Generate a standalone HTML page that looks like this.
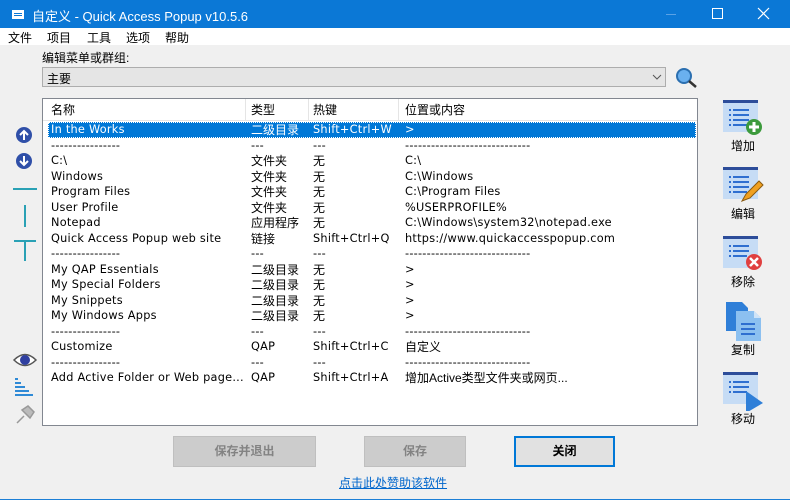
<!DOCTYPE html>
<html><head><meta charset="utf-8"><style>
*{margin:0;padding:0;box-sizing:border-box}
body{width:790px;height:500px;overflow:hidden;background:#f0f0f0;font-family:"DejaVu Sans","Noto Sans CJK SC",sans-serif;font-size:11px;color:#000;position:relative}
.a{position:absolute;white-space:nowrap}
.cjk{font-family:"Liberation Sans","Noto Sans CJK SC",sans-serif;font-size:12px}
#title{left:0;top:0;width:790px;height:28px;background:#0b78d6;color:#fff}
#menu{left:0;top:28px;width:790px;height:17px;background:#fff}
#list{left:42px;top:98px;width:656px;height:328px;background:#fff;border:1px solid #828790}
.row{position:absolute;left:0;height:15.5px;width:654px;line-height:16px;font-size:11.3px;letter-spacing:0.25px}
.row span{position:absolute;top:0}
.row .cjk{letter-spacing:0;font-size:12px}
.sel{background:#0078d7;color:#fff;outline:1px dotted #fff;outline-offset:-1px}
.btn{position:absolute;height:31px;background:#cccccc;border:1px solid #bfbfbf;color:#838383;font-weight:bold;text-align:center;line-height:29px;font-family:"Liberation Sans","Noto Sans CJK SC",sans-serif;font-size:12px}
.rl{font-family:"Liberation Sans","Noto Sans CJK SC",sans-serif;font-size:12px;text-align:center;width:50px}
</style></head><body>
<div class="a" id="title">
 <svg class="a" style="left:11px;top:9px" width="14" height="11"><rect x="1" y="1" width="12" height="9" fill="#fff"/><rect x="3" y="4" width="8" height="1" fill="#0b78d6"/><rect x="3" y="6" width="8" height="1" fill="#0b78d6"/></svg>
 <span class="a cjk" style="left:32px;top:6px;font-size:13px">自定义 - Quick Access Popup v10.5.6</span>
 <div class="a" style="left:666px;top:14px;width:10px;height:1px;background:#5aa2e6"></div>
 <div class="a" style="left:712px;top:8px;width:11px;height:11px;border:1px solid #fff"></div>
 <svg class="a" style="left:757px;top:7px" width="13" height="13"><path d="M1 1L12 12M12 1L1 12" stroke="#fff" stroke-width="1.2"/></svg>
</div>
<div class="a" id="menu"><span class="a cjk" style="left:8px;top:1px">文件</span><span class="a cjk" style="left:47px;top:1px">项目</span><span class="a cjk" style="left:87px;top:1px">工具</span><span class="a cjk" style="left:126px;top:1px">选项</span><span class="a cjk" style="left:165px;top:1px">帮助</span></div>
<span class="a cjk" style="left:42px;top:49px">编辑菜单或群组:</span>
<div class="a" style="left:42px;top:67px;width:624px;height:20px;background:#e5e5e5;border:1px solid #adadad"><span class="a cjk" style="left:4px;top:2px">主要</span><svg class="a" style="left:609px;top:6px" width="10" height="6"><path d="M1 1L5 5L9 1" stroke="#555" fill="none"/></svg></div>
<svg class="a" style="left:675px;top:67px" width="24" height="22"><circle cx="9" cy="9" r="7" fill="#6ab0ef" stroke="#2b6fb0" stroke-width="2"/><path d="M14 14L21 20" stroke="#333" stroke-width="2.5"/></svg>
<div class="a" id="list">
 <div class="row" style="top:0;height:22px;line-height:22px;border-bottom:1px solid #e5e5e5"><span class="cjk" style="left:8px">名称</span><span class="cjk" style="left:208px">类型</span><span class="cjk" style="left:270px">热键</span><span class="cjk" style="left:362px">位置或内容</span>
  <i class="a" style="left:202px;top:0;width:1px;height:22px;background:#e5e5e5"></i><i class="a" style="left:265px;top:0;width:1px;height:22px;background:#e5e5e5"></i><i class="a" style="left:355px;top:0;width:1px;height:22px;background:#e5e5e5"></i></div>
 <div class="row sel" style="top:23px;left:5px;width:648px"><span style="left:3px">In the Works</span><span class="cjk" style="left:203px">二级目录</span><span style="left:265px">Shift+Ctrl+W</span><span style="left:357px">&gt;</span></div>
 <div class="row" style="top:38.5px"><span style="left:8px">----------------</span><span style="left:208px">---</span><span style="left:270px">---</span><span style="left:362px">-----------------------------</span></div>
 <div class="row" style="top:54px"><span style="left:8px">C:\</span><span class="cjk" style="left:208px">文件夹</span><span class="cjk" style="left:270px">无</span><span style="left:362px">C:\</span></div>
 <div class="row" style="top:69.5px"><span style="left:8px">Windows</span><span class="cjk" style="left:208px">文件夹</span><span class="cjk" style="left:270px">无</span><span style="left:362px">C:\Windows</span></div>
 <div class="row" style="top:85px"><span style="left:8px">Program Files</span><span class="cjk" style="left:208px">文件夹</span><span class="cjk" style="left:270px">无</span><span style="left:362px">C:\Program Files</span></div>
 <div class="row" style="top:100.5px"><span style="left:8px">User Profile</span><span class="cjk" style="left:208px">文件夹</span><span class="cjk" style="left:270px">无</span><span style="left:362px">%USERPROFILE%</span></div>
 <div class="row" style="top:116px"><span style="left:8px">Notepad</span><span class="cjk" style="left:208px">应用程序</span><span class="cjk" style="left:270px">无</span><span style="left:362px">C:\Windows\system32\notepad.exe</span></div>
 <div class="row" style="top:131.5px"><span style="left:8px">Quick Access Popup web site</span><span class="cjk" style="left:208px">链接</span><span style="left:270px">Shift+Ctrl+Q</span><span style="left:362px">https://www.quickaccesspopup.com</span></div>
 <div class="row" style="top:147px"><span style="left:8px">----------------</span><span style="left:208px">---</span><span style="left:270px">---</span><span style="left:362px">-----------------------------</span></div>
 <div class="row" style="top:162.5px"><span style="left:8px">My QAP Essentials</span><span class="cjk" style="left:208px">二级目录</span><span class="cjk" style="left:270px">无</span><span style="left:362px">&gt;</span></div>
 <div class="row" style="top:178px"><span style="left:8px">My Special Folders</span><span class="cjk" style="left:208px">二级目录</span><span class="cjk" style="left:270px">无</span><span style="left:362px">&gt;</span></div>
 <div class="row" style="top:193.5px"><span style="left:8px">My Snippets</span><span class="cjk" style="left:208px">二级目录</span><span class="cjk" style="left:270px">无</span><span style="left:362px">&gt;</span></div>
 <div class="row" style="top:209px"><span style="left:8px">My Windows Apps</span><span class="cjk" style="left:208px">二级目录</span><span class="cjk" style="left:270px">无</span><span style="left:362px">&gt;</span></div>
 <div class="row" style="top:224.5px"><span style="left:8px">----------------</span><span style="left:208px">---</span><span style="left:270px">---</span><span style="left:362px">-----------------------------</span></div>
 <div class="row" style="top:240px"><span style="left:8px">Customize</span><span style="left:208px">QAP</span><span style="left:270px">Shift+Ctrl+C</span><span class="cjk" style="left:362px">自定义</span></div>
 <div class="row" style="top:255.5px"><span style="left:8px">----------------</span><span style="left:208px">---</span><span style="left:270px">---</span><span style="left:362px">-----------------------------</span></div>
 <div class="row" style="top:271px"><span style="left:8px">Add Active Folder or Web page...</span><span style="left:208px">QAP</span><span style="left:270px">Shift+Ctrl+A</span><span class="cjk" style="left:362px">增加Active类型文件夹或网页...</span></div>
</div>
<!-- left icons -->
<svg class="a" style="left:12px;top:126px" width="24" height="46"><circle cx="12" cy="9" r="8" fill="#2f4fa8"/><path d="M12 14V5M8 9L12 5L16 9" stroke="#fff" stroke-width="2" fill="none"/><circle cx="12" cy="35" r="8" fill="#2f4fa8"/><path d="M12 30V39M8 35L12 39L16 35" stroke="#fff" stroke-width="2" fill="none"/></svg>
<svg class="a" style="left:10px;top:185px" width="30" height="76"><path d="M3 4H27" stroke="#2aa1b5" stroke-width="2"/><path d="M15 20V42" stroke="#2aa1b5" stroke-width="2"/><path d="M4 56H26M15 56V76" stroke="#2aa1b5" stroke-width="2"/></svg>
<svg class="a" style="left:12px;top:350px" width="28" height="76"><path d="M2 10Q13 -1 24 10Q13 21 2 10Z" fill="#fff" stroke="#555" stroke-width="1.5"/><circle cx="13" cy="10" r="5" fill="#2f3fa0"/><g fill="#2f8ad6"><rect x="3" y="28" width="3" height="2"/><rect x="3" y="32" width="6" height="2"/><rect x="3" y="36" width="10" height="2"/><rect x="3" y="40" width="14" height="2"/><rect x="3" y="44" width="18" height="2"/></g><path d="M5 73L12 66M10 60L18 68L22 62L16 56Z" stroke="#999" fill="#bbb" stroke-width="1.5"/></svg>
<!-- right icons -->
<svg class="a" style="left:722px;top:99px" width="44" height="40"><rect x="1" y="1" width="35" height="32" fill="#c6dcf5"/><rect x="1" y="1" width="35" height="3" fill="#2d4d9a"/><g fill="#2f6fd0"><rect x="7" y="10" width="2" height="2"/><rect x="11" y="10" width="16" height="2"/><rect x="7" y="15" width="2" height="2"/><rect x="11" y="15" width="16" height="2"/><rect x="7" y="20" width="2" height="2"/><rect x="11" y="20" width="16" height="2"/><rect x="7" y="25" width="2" height="2"/><rect x="11" y="25" width="14" height="2"/></g><circle cx="32" cy="28" r="8" fill="#3c9a3c"/><path d="M32 23V33M27 28H37" stroke="#fff" stroke-width="3"/></svg>
<span class="a rl" style="left:718px;top:137px">增加</span>
<svg class="a" style="left:722px;top:166px" width="44" height="40"><rect x="1" y="1" width="35" height="32" fill="#c6dcf5"/><rect x="1" y="1" width="35" height="3" fill="#2d4d9a"/><g fill="#2f6fd0"><rect x="7" y="10" width="2" height="2"/><rect x="11" y="10" width="16" height="2"/><rect x="7" y="15" width="2" height="2"/><rect x="11" y="15" width="16" height="2"/><rect x="7" y="20" width="2" height="2"/><rect x="11" y="20" width="16" height="2"/><rect x="7" y="25" width="2" height="2"/><rect x="11" y="25" width="14" height="2"/></g><path d="M20 35L24 28L37 15L41 19L28 32Z" fill="#f0a020" stroke="#8a5a10" stroke-width="1"/></svg>
<span class="a rl" style="left:718px;top:205px">编辑</span>
<svg class="a" style="left:722px;top:235px" width="44" height="40"><rect x="1" y="1" width="35" height="32" fill="#c6dcf5"/><rect x="1" y="1" width="35" height="3" fill="#2d4d9a"/><g fill="#2f6fd0"><rect x="7" y="10" width="2" height="2"/><rect x="11" y="10" width="16" height="2"/><rect x="7" y="15" width="2" height="2"/><rect x="11" y="15" width="16" height="2"/><rect x="7" y="20" width="2" height="2"/><rect x="11" y="20" width="14" height="2"/></g><circle cx="32" cy="27" r="8" fill="#e04040"/><path d="M28 23L36 31M36 23L28 31" stroke="#fff" stroke-width="2.5"/></svg>
<span class="a rl" style="left:718px;top:273px">移除</span>
<svg class="a" style="left:722px;top:301px" width="44" height="40"><path d="M4 1H20L26 7V30H4Z" fill="#2f7fd8"/><path d="M14 10H32L39 17V40H14Z" fill="#8cc0f0"/><path d="M32 10V17H39Z" fill="#cfe4f8"/><g fill="#2f6fd0"><rect x="19" y="22" width="14" height="2"/><rect x="19" y="27" width="14" height="2"/><rect x="19" y="32" width="14" height="2"/></g></svg>
<span class="a rl" style="left:718px;top:341px">复制</span>
<svg class="a" style="left:722px;top:371px" width="44" height="40"><rect x="1" y="1" width="35" height="32" fill="#c6dcf5"/><rect x="1" y="1" width="35" height="3" fill="#2d4d9a"/><g fill="#2f6fd0"><rect x="7" y="10" width="2" height="2"/><rect x="11" y="10" width="16" height="2"/><rect x="7" y="15" width="2" height="2"/><rect x="11" y="15" width="16" height="2"/><rect x="7" y="20" width="2" height="2"/><rect x="11" y="20" width="14" height="2"/></g><path d="M24 20L41 32L24 42Z" fill="#2f7fd8"/></svg>
<span class="a rl" style="left:718px;top:410px">移动</span>
<div class="btn" style="left:173px;top:436px;width:143px">保存并退出</div>
<div class="btn" style="left:364px;top:436px;width:102px">保存</div>
<div class="btn" style="left:514px;top:436px;width:101px;background:#e1e1e1;border:2px solid #0078d7;color:#000;line-height:27px">关闭</div>
<span class="a cjk" style="left:339px;top:474px;color:#0066cc;text-decoration:underline">点击此处赞助该软件</span>
<div class="a" style="left:0;top:499px;width:790px;height:1px;background:#1c7fd6"></div>
</body></html>
